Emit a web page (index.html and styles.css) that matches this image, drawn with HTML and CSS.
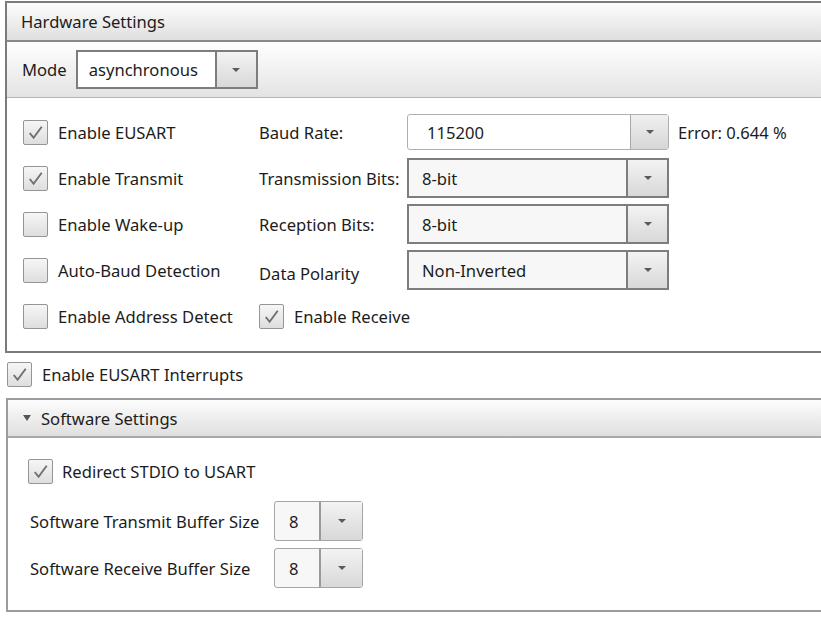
FILE: index.html
```html
<!DOCTYPE html>
<html>
<head>
<meta charset="utf-8">
<link rel="stylesheet" href="styles.css">
</head>
<body>
<section class="panel hw">
  <div class="panel-head">Hardware Settings</div>
  <div class="toolbar">
    <span class="tb-label">Mode</span>
    <div class="combo combo-mode"><span class="combo-val">asynchronous</span><span class="combo-btn"><i class="arrow"></i></span></div>
  </div>
  <div class="hw-body">
    <label class="chk"><span class="cb on"><svg viewBox="0 0 24 24"><path d="M6 12.5 L10 17.5 L18.5 6"/></svg></span>Enable EUSART</label>
    <span class="flabel">Baud Rate:</span>
    <div class="combo combo-edit"><span class="combo-val">115200</span><span class="combo-btn"><i class="arrow"></i></span></div>
    <span class="err">Error: 0.644 %</span>

    <label class="chk"><span class="cb on"><svg viewBox="0 0 24 24"><path d="M6 12.5 L10 17.5 L18.5 6"/></svg></span>Enable Transmit</label>
    <span class="flabel">Transmission Bits:</span>
    <div class="combo combo-sel"><span class="combo-val">8-bit</span><span class="combo-btn"><i class="arrow"></i></span></div>
    <span></span>

    <label class="chk"><span class="cb"></span>Enable Wake-up</label>
    <span class="flabel">Reception Bits:</span>
    <div class="combo combo-sel"><span class="combo-val">8-bit</span><span class="combo-btn"><i class="arrow"></i></span></div>
    <span></span>

    <label class="chk"><span class="cb"></span>Auto-Baud Detection</label>
    <span class="flabel low">Data Polarity</span>
    <div class="combo combo-sel"><span class="combo-val">Non-Inverted</span><span class="combo-btn"><i class="arrow"></i></span></div>
    <span></span>

    <label class="chk"><span class="cb"></span>Enable Address Detect</label>
    <label class="chk chk-wide"><span class="cb on"><svg viewBox="0 0 24 24"><path d="M6 12.5 L10 17.5 L18.5 6"/></svg></span>Enable Receive</label>
  </div>
</section>

<label class="chk interrupts"><span class="cb on"><svg viewBox="0 0 24 24"><path d="M6 12.5 L10 17.5 L18.5 6"/></svg></span>Enable EUSART Interrupts</label>

<section class="panel sw">
  <div class="panel-head sw-head"><svg class="tri" viewBox="0 0 8 6"><polygon points="0,0 8,0 4,6"/></svg>Software Settings</div>
  <div class="sw-body">
    <label class="chk redirect"><span class="cb on"><svg viewBox="0 0 24 24"><path d="M6 12.5 L10 17.5 L18.5 6"/></svg></span>Redirect STDIO to USART</label>
    <div class="buf-grid">
      <span>Software Transmit Buffer Size</span>
      <div class="combo combo-buf"><span class="combo-val">8</span><span class="combo-btn"><i class="arrow"></i></span></div>
      <span>Software Receive Buffer Size</span>
      <div class="combo combo-buf"><span class="combo-val">8</span><span class="combo-btn"><i class="arrow"></i></span></div>
    </div>
  </div>
</section>
</body>
</html>
```
FILE: styles.css
```css
html, body {
  margin: 0;
  background: #ffffff;
  overflow: hidden;
}
body {
  font-family: "Noto Sans", "Open Sans", sans-serif;
  font-size: 16.6px;
  color: #1c1c1c;
}

.panel {
  border: 2px solid #7b7b7b;
  border-right: 0;
}
.hw {
  margin: 1px 0 0 5px;
}
.panel-head {
  height: 37px;
  display: flex;
  align-items: center;
  padding-left: 14px;
  background: linear-gradient(#fdfdfd, #dfdfdf);
  border-bottom: 2px solid #8a8a8a;
}

.toolbar {
  height: 55px;
  display: flex;
  align-items: center;
  padding-left: 15px;
  gap: 9px;
  background: linear-gradient(#ffffff, #e3e3e3);
  border-bottom: 1px solid #b4b4b4;
}

/* combo boxes */
.combo {
  display: flex;
  box-sizing: border-box;
  border: 2px solid #7d7d7d;
  background: #f7f7f7;
}
.combo-val {
  flex: 1;
  display: flex;
  align-items: center;
  padding-left: 11px;
}
.combo-btn {
  width: 39px;
  display: flex;
  align-items: center;
  justify-content: center;
  border-left: 2px solid #7d7d7d;
  background: linear-gradient(#f3f3f3, #d8d8d8);
}
.arrow {
  width: 0;
  height: 0;
  border-left: 4px solid transparent;
  border-right: 4px solid transparent;
  border-top: 4px solid #5a5a5a;
}
.combo-mode {
  width: 182px;
  height: 39px;
  background: #ffffff;
}
.combo-edit {
  width: 262px;
  height: 36px;
  border: 1px solid #b0b0b0;
  border-radius: 3px;
  background: #ffffff;
}
.combo-edit .combo-val { padding-left: 19px; }
.combo-edit .combo-btn {
  width: 37px;
  border-left: 1px solid #a8a8a8;
  background: linear-gradient(#f0f0f0, #d6d6d6);
}
.combo-sel {
  width: 262px;
  height: 40px;
}
.combo-sel .combo-val { padding-left: 13px; }

/* hardware body */
.hw-body {
  display: grid;
  grid-template-columns: 236px 148px 262px auto;
  grid-auto-rows: 46px;
  align-items: center;
  padding: 11px 0 12px 16px;
}
.flabel.low { padding-top: 6px; }
.err { padding-left: 9px; }
.chk-wide { grid-column: 2 / span 3; }

/* checkbox */
.chk {
  display: flex;
  align-items: center;
  gap: 10px;
}
.cb {
  box-sizing: border-box;
  width: 25px;
  height: 25px;
  flex: none;
  border: 1px solid #959595;
  border-radius: 2px;
  background: linear-gradient(#f6f6f6, #dedede);
  display: flex;
}
.cb svg {
  width: 23px;
  height: 23px;
}
.cb path {
  fill: none;
  stroke: #6f6f6f;
  stroke-width: 2;
}

.interrupts {
  margin: 9px 0 0 7px;
  gap: 10px;
}

/* software */
.sw {
  margin: 11px 0 0 6px;
  border-color: #9c9c9c;
}
.sw-head {
  height: 36px;
  padding-left: 15px;
  gap: 10px;
  border-bottom: 2px solid #a8a8a8;
}
.tri {
  width: 8px;
  height: 6px;
  fill: #555555;
}
.sw-body {
  padding: 21px 0 22px 20px;
}
.redirect { gap: 9px; }
.buf-grid {
  display: grid;
  grid-template-columns: 244px auto;
  row-gap: 7px;
  align-items: center;
  margin: 17px 0 0 2px;
}
.combo-buf {
  width: 89px;
  height: 40px;
  border: 1px solid #a5a5a5;
  border-radius: 3px;
}
.combo-buf .combo-val { padding-left: 14px; }
.combo-buf .combo-btn {
  width: 41px;
  border-left: 2px solid #9a9a9a;
}
```
